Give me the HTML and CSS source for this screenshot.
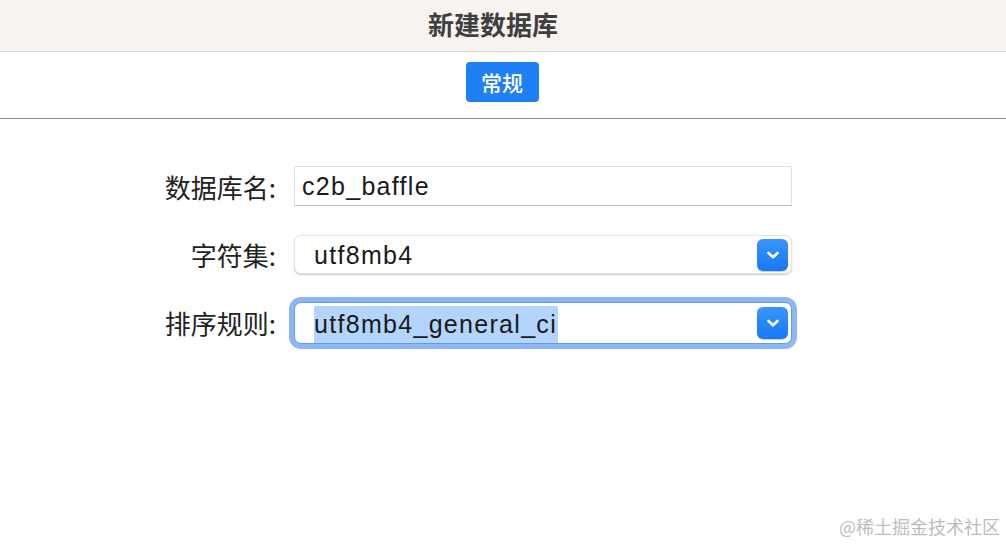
FILE: index.html
```html
<!DOCTYPE html>
<html lang="zh-CN">
<head>
<meta charset="utf-8">
<title>新建数据库</title>
<link rel="stylesheet" href="styles.css">
</head>
<body>
<header class="titlebar">新建数据库</header>
<nav class="tabs">
  <span class="tab active">常规</span>
</nav>
<main class="form">
  <label class="label">数据库名:</label>
  <div class="textfield"><span class="value">c2b_baffle</span></div>

  <label class="label">字符集:</label>
  <div class="select">
    <span class="value">utf8mb4</span>
    <span class="chev"><svg width="14" height="10" viewBox="0 0 14 10"><path d="M2.5 3 L7 7.2 L11.5 3" fill="none" stroke="#fff" stroke-width="2.6" stroke-linecap="round" stroke-linejoin="round"/></svg></span>
  </div>

  <label class="label">排序规则:</label>
  <div class="select focused">
    <span class="value"><span class="sel">utf8mb4_general_ci</span></span>
    <span class="chev"><svg width="14" height="10" viewBox="0 0 14 10"><path d="M2.5 3 L7 7.2 L11.5 3" fill="none" stroke="#fff" stroke-width="2.6" stroke-linecap="round" stroke-linejoin="round"/></svg></span>
  </div>
</main>
<div class="watermark">@稀土掘金技术社区</div>
</body>
</html>
```
FILE: styles.css
```css
html, body {
  margin: 0;
  padding: 0;
  background: #ffffff;
  font-family: "Liberation Sans", "Noto Sans CJK SC", sans-serif;
  color: #262626;
}
body {
  width: 1006px;
  height: 544px;
  overflow: hidden;
  position: relative;
}
.titlebar {
  box-sizing: border-box;
  height: 52px;
  background: #f6f3f1;
  border-bottom: 1px solid #dcdad8;
  display: flex;
  align-items: center;
  justify-content: center;
  font-family: "Noto Sans CJK SC", sans-serif;
  font-weight: 700;
  font-size: 26px;
  color: #3f3f3f;
  padding-bottom: 5px;
  padding-right: 20px;
}
.tabs {
  box-sizing: border-box;
  height: 67px;
  border-bottom: 1px solid #8a8a8a;
  display: flex;
  justify-content: center;
  align-items: flex-start;
  padding-top: 10px;
}
.tab {
  width: 73px;
  height: 40px;
  border-radius: 4px;
  display: flex;
  align-items: center;
  justify-content: center;
  font-family: "Noto Sans CJK SC", sans-serif;
  font-size: 21px;
  font-weight: 500;
  color: #ffffff;
  margin-right: 2px;
}
.tab.active {
  background: #1f80f6;
}
.form {
  display: grid;
  grid-template-columns: 130px 498px;
  grid-auto-rows: 40px;
  column-gap: 17px;
  row-gap: 28px;
  padding-left: 147px;
  padding-top: 47px;
}
.label {
  display: flex;
  align-items: center;
  justify-content: flex-end;
  font-family: "Noto Sans CJK SC", sans-serif;
  font-size: 26px;
  color: #222222;
  padding-right: 1px;
}
.value {
  font-family: "Liberation Sans", sans-serif;
  font-size: 25px;
  letter-spacing: 1.3px;
  color: #1a1a1a;
}
.textfield {
  box-sizing: border-box;
  border: 1px solid #e0e0e0;
  border-bottom: 1px solid #bdbdbd;
  background: #fff;
  display: flex;
  align-items: center;
  padding-left: 7px;
  padding-top: 1px;
}
.select {
  box-sizing: border-box;
  height: 39px;
  margin-top: 1px;
  border: 1px solid #e3e3e3;
  border-radius: 7px;
  background: #fff;
  box-shadow: 0 1px 1.5px rgba(0,0,0,0.22);
  display: flex;
  align-items: center;
  justify-content: space-between;
  padding-left: 19px;
  padding-right: 3px;
}
.select .value {
  padding-top: 2px;
}
.select.focused {
  height: 42px;
  margin-top: 0;
  border: 1px solid #5f9bf0;
  box-shadow: 0 0 0 5px #8cb6f4;
  border-radius: 7px;
}
.sel {
  background: #b3d4fc;
  padding: 4px 1px 5px 0;
}
.chev {
  width: 31px;
  height: 32px;
  border-radius: 6px;
  background: linear-gradient(#3a95fc, #1679f4);
  display: flex;
  align-items: center;
  justify-content: center;
  box-shadow: 0 0.5px 1px rgba(0,0,0,0.2);
}
.watermark {
  position: absolute;
  right: 6px;
  bottom: 5px;
  font-family: "Noto Sans CJK SC", sans-serif;
  font-size: 18px;
  color: #bdbdbd;
}
```
